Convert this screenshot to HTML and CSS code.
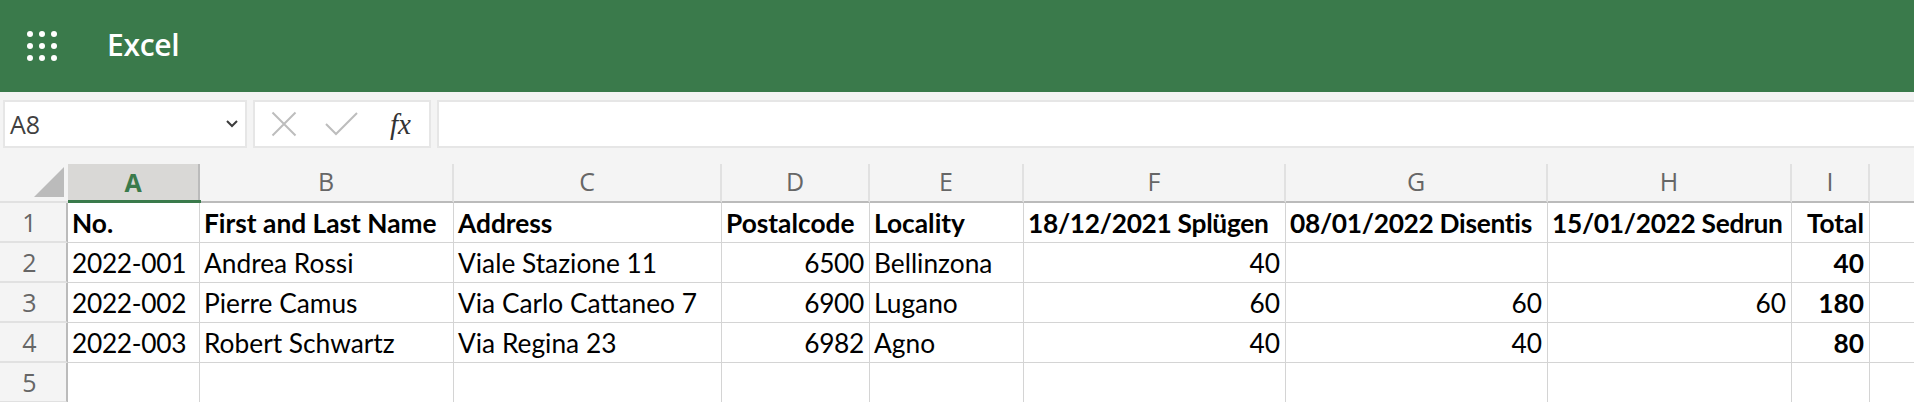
FILE: index.html
```html
<!DOCTYPE html>
<html lang="en">
<head>
<meta charset="utf-8">
<title>Excel</title>
<link rel="stylesheet" href="styles.css">
</head>
<body>
<header class="appbar">
  <svg class="waffle" width="30" height="30" viewBox="0 0 30 30" aria-hidden="true">
    <g fill="#fff">
      <circle cx="3" cy="3" r="3"/><circle cx="15" cy="3" r="3"/><circle cx="27" cy="3" r="3"/>
      <circle cx="3" cy="15" r="3"/><circle cx="15" cy="15" r="3"/><circle cx="27" cy="15" r="3"/>
      <circle cx="3" cy="27" r="3"/><circle cx="15" cy="27" r="3"/><circle cx="27" cy="27" r="3"/>
    </g>
  </svg>
  <span class="appname">Excel</span>
</header>
<section class="toolbar">
  <div class="namebox">
    <span>A8</span>
    <svg width="12" height="8" viewBox="0 0 12 8" aria-hidden="true"><path d="M1 1l5 5 5-5" fill="none" stroke="#3c3c3c" stroke-width="2"/></svg>
  </div>
  <div class="fxbox">
    <svg width="26" height="26" viewBox="0 0 26 26" aria-hidden="true"><path d="M1.500 1.500l23 23M24.500 1.500l-23 23" fill="none" stroke="#bdbdbd" stroke-width="2"/></svg>
    <svg width="34" height="24" viewBox="0 0 34 24" aria-hidden="true"><path d="M1 12l10 10L32 1" fill="none" stroke="#bdbdbd" stroke-width="2"/></svg>
    <span class="fx">fx</span>
  </div>
  <div class="formula"></div>
</section>
<main class="sheet">
  <div class="corner"><svg width="30" height="30" viewBox="0 0 30 30" aria-hidden="true"><path d="M0 30L30 0v30z" fill="#bbb"/></svg></div>
  <div class="ch active">A</div><div class="ch">B</div><div class="ch">C</div><div class="ch">D</div><div class="ch">E</div><div class="ch">F</div><div class="ch">G</div><div class="ch">H</div><div class="ch">I</div><div class="ch end"></div>

  <div class="rh">1</div>
  <div class="c b">No.</div><div class="c b">First and Last Name</div><div class="c b">Address</div><div class="c b">Postalcode</div><div class="c b">Locality</div><div class="c b n">18/12/2021 Splügen</div><div class="c b n">08/01/2022 Disentis</div><div class="c b n">15/01/2022 Sedrun</div><div class="c b r">Total</div><div class="c end"></div>

  <div class="rh">2</div>
  <div class="c n">2022-001</div><div class="c">Andrea Rossi</div><div class="c">Viale Stazione 11</div><div class="c r n">6500</div><div class="c">Bellinzona</div><div class="c r">40</div><div class="c"></div><div class="c"></div><div class="c b r">40</div><div class="c end"></div>

  <div class="rh">3</div>
  <div class="c n">2022-002</div><div class="c">Pierre Camus</div><div class="c">Via Carlo Cattaneo 7</div><div class="c r n">6900</div><div class="c">Lugano</div><div class="c r">60</div><div class="c r">60</div><div class="c r">60</div><div class="c b r">180</div><div class="c end"></div>

  <div class="rh">4</div>
  <div class="c n">2022-003</div><div class="c">Robert Schwartz</div><div class="c">Via Regina 23</div><div class="c r n">6982</div><div class="c">Agno</div><div class="c r">40</div><div class="c r">40</div><div class="c"></div><div class="c b r">80</div><div class="c end"></div>

  <div class="rh">5</div>
  <div class="c"></div><div class="c"></div><div class="c"></div><div class="c"></div><div class="c"></div><div class="c"></div><div class="c"></div><div class="c"></div><div class="c"></div><div class="c end"></div>
</main>
</body>
</html>
```
FILE: styles.css
```css
* { box-sizing: border-box; }
html, body { margin: 0; height: 402px; overflow: hidden; background: #fff; }
body { font-family: "Open Sans", "Noto Sans", sans-serif; }

.appbar {
  height: 92px;
  background: #3a7a4b;
  display: flex;
  align-items: center;
  padding-left: 27px;
  gap: 50px;
  color: #fff;
}
.waffle { flex: none; }
.appname { font-size: 30px; font-weight: 600; letter-spacing: -0.3px; line-height: 1; padding-bottom: 3px; }

.toolbar {
  height: 72px;
  background: #f4f4f4;
  display: flex;
  gap: 6px;
  padding: 8px 0 0 3px;
  align-items: flex-start;
}
.namebox, .fxbox, .formula {
  height: 48px;
  background: #fff;
  border: 2px solid #e6e6e6;
  display: flex;
  align-items: center;
}
.namebox {
  width: 244px;
  padding: 0 7px 0 5px;
  justify-content: space-between;
  font-size: 25px;
  color: #404040;
}
.fxbox { width: 178px; padding-left: 16px; gap: 28px; }
.fx { font: italic 29px "Liberation Serif", serif; color: #333; margin-left: 3px; }
.formula { flex: 1; border-right: 0; }

.sheet {
  display: grid;
  grid-template-columns: 68px 132px 254px 268px 148px 154px 262px 262px 244px 78px 44px;
  grid-template-rows: 39px 40px 40px 40px 40px 40px;
  font-family: "Lato", "Carlito", sans-serif;
  font-size: 26.300px;
  color: #000;
  background: #fff;
}
.corner, .ch {
  background: #f4f4f4;
  border-bottom: 2px solid #bbb;
}
.corner {
  display: flex;
  justify-content: flex-end;
  align-items: flex-start;
  padding: 3px 4px 0 0;
  border-bottom-color: #e1e1e1;
}
.ch {
  display: flex;
  align-items: center;
  justify-content: center;
  border-right: 2px solid #e1e1e1;
  font: 25px "Open Sans", sans-serif;
  color: #666;
  padding-bottom: 3px;
}
.ch.end { border-right: 0; }
.ch.active {
  background: #d9d8d6;
  color: #3a7a4b;
  font-weight: 700;
  border-right-color: #bbb;
  border-bottom: 0;
  position: relative;
}
.ch.active::after {
  content: "";
  position: absolute;
  left: 0;
  right: -3px;
  bottom: 0;
  height: 3px;
  background: #3a7a4b;
}
.rh {
  background: #f4f4f4;
  border-right: 2px solid #bbb;
  border-bottom: 2px solid #e1e1e1;
  display: flex;
  align-items: center;
  justify-content: center;
  font: 25px "Open Sans", sans-serif;
  color: #666;
  padding-right: 7px;
}
.c {
  border-right: 1px solid #d4d4d4;
  border-bottom: 1px solid #d4d4d4;
  display: flex;
  align-items: center;
  padding: 0 4px;
  white-space: nowrap;
}
.c.r { padding-right: 5px; }
.c.end { border-right: 0; }
.b { font-weight: 700; }
.r { justify-content: flex-end; }
.n { letter-spacing: -0.300px; }
```
